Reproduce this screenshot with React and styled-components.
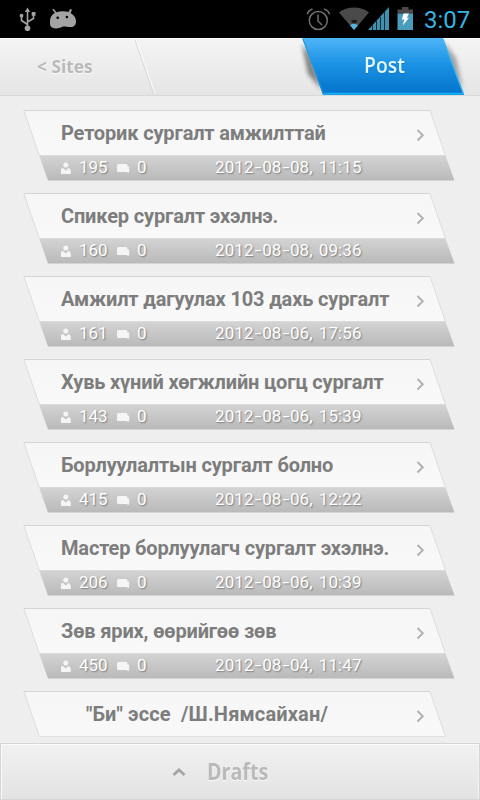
import { Fragment } from "react";
import styled, { createGlobalStyle, css } from "styled-components";

const GlobalStyle = createGlobalStyle`
  * {
    box-sizing: border-box;
  }
  body {
    margin: 0;
    background: #eeeeee;
    font-family: Roboto, "Noto Sans", sans-serif;
  }
`;

const flex = (justify = "flex-start") => css`
  display: flex;
  align-items: center;
  justify-content: ${justify};
`;

const Screen = styled.div`
  width: 480px;
  height: 800px;
  overflow: hidden;
  display: flex;
  flex-direction: column;
  background: #eeeeee;
`;

/* status bar */
const StatusBar = styled.div`
  ${flex("space-between")}
  height: 38px;
  flex: none;
  background: #000;
`;
const StatusIcons = styled.div`
  ${flex()}
`;
const Clock = styled.span`
  width: 57px;
  padding-left: 1px;
  padding-top: 2px;
  font-size: 24px;
  line-height: 36px;
  color: #33b5e5;
  white-space: nowrap;
`;

/* header */
const Header = styled.header`
  ${flex("space-between")}
  height: 58px;
  flex: none;
  align-items: stretch;
  background: linear-gradient(#f4f4f4, #e5e5e5);
  border-top: 1px solid #fbfbfb;
  border-bottom: 1px solid #d9d9d9;
`;
const BackButton = styled.div`
  ${flex()}
  width: 155px;
  padding: 0 0 2px 37px;
  position: relative;
`;
const Slash = styled.svg`
  position: absolute;
  right: 0;
  top: 0;
`;
const Condensed = styled.span`
  display: block;
  font-family: "Open Sans", "Noto Sans", sans-serif;
  font-size: ${(props) => props.$size}px;
  font-weight: ${(props) => props.$weight || 700};
  line-height: 1;
  color: ${(props) => props.$color};
  text-shadow: ${(props) => props.$shadow || "0 1px 0 #fafafa"};
  transform: scaleX(${(props) => props.$scale});
  transform-origin: 0 50%;
  white-space: nowrap;
`;
const PostButton = styled.div`
  width: 180px;
  position: relative;
  padding: 14px 0 0 64px;
`;
const PostShape = styled.svg`
  position: absolute;
  left: -10px;
  top: -1px;
`;
const PostLabel = styled.div`
  position: relative;
`;

/* list */
const List = styled.main`
  flex: 1;
  min-height: 0;
  overflow: hidden;
  padding: 14px 25px 0 23px;
`;
const Card = styled.article`
  height: 71px;
  margin-bottom: 12px;
  position: relative;
`;
const CardShape = styled.svg`
  position: absolute;
  left: 0;
  top: 0;
`;
const CardTitle = styled.div`
  ${flex("space-between")}
  position: relative;
  height: 45px;
  padding: 0 30px 0 ${(props) => (props.$indent ? 63 : 38)}px;
  svg {
    margin-top: 4px;
  }
`;
const TitleText = styled.h2`
  margin: 0;
  font-size: 20px;
  font-weight: 700;
  line-height: 24px;
  letter-spacing: ${(props) => (props.$indent ? 0.16 : -0.16)}px;
  color: #7d7d7d;
  white-space: pre;
`;
const CardMeta = styled.div`
  ${flex()}
  position: relative;
  height: 26px;
  padding: 0 0 3px 36px;
  font-size: 17px;
  line-height: 20px;
  color: #fff;
  text-shadow: 1px 1px 1.5px #7c7c7c;
  svg {
    margin-top: 2px;
  }
`;
const Views = styled.span`
  width: 43px;
  padding-left: 6px;
`;
const Comments = styled.span`
  width: 85px;
  padding-left: 7px;
`;
const DateText = styled.time`
  white-space: nowrap;
  letter-spacing: 0.13px;
  word-spacing: 1.6px;
`;
const Dash = styled.span`
  display: inline-block;
  width: 8.4px;
  text-align: center;
  transform: scaleX(1.45);
`;

/* footer */
const Drafts = styled.footer`
  ${flex()}
  height: 57px;
  flex: none;
  gap: 21px;
  padding-left: 171px;
  border: 1px solid #d5d5d5;
  background: linear-gradient(#f1f1f1, #e3e3e3);
  box-shadow: inset 1px 1px 0 #fafafa, inset -1px 0 0 #f5f5f5;
`;

const posts = [
  { title: "Реторик сургалт амжилттай", views: 195, date: "2012-08-08, 11:15" },
  { title: "Спикер сургалт эхэлнэ.", views: 160, date: "2012-08-08, 09:36" },
  { title: "Амжилт дагуулах 103 дахь сургалт", views: 161, date: "2012-08-06, 17:56" },
  { title: "Хувь хүний хөгжлийн цогц сургалт", views: 143, date: "2012-08-06, 15:39" },
  { title: "Борлуулалтын сургалт болно", views: 415, date: "2012-08-06, 12:22" },
  { title: "Мастер борлуулагч сургалт эхэлнэ.", views: 206, date: "2012-08-06, 10:39" },
  { title: "Зөв ярих, өөрийгөө зөв", views: 450, date: "2012-08-04, 11:47" },
  { title: "\"Би\" эссе  /Ш.Нямсайхан/", indent: true },
];

function LeftStatus() {
  return (
    <svg width="90" height="38" fill="none">
      <g stroke="#a3a3a3" strokeWidth="1.6">
        <path d="M27.5 28V11M27.5 24.5L21.5 20.5V16M27.5 22L33.5 18.5V14" />
      </g>
      <g fill="#a3a3a3">
        <path d="M24.8 12L27.5 7.5L30.2 12Z" />
        <circle cx="27.5" cy="28.3" r="2.8" />
        <circle cx="21.5" cy="15.7" r="1.9" />
        <rect x="31.7" y="12" width="3.8" height="3.8" />
        <path d="M50 22C50 17 52 14.5 55 13L52.3 9.5L53.6 8.7L56.5 12.2C60 11 65 11 68.5 12L70.3 9L72 9.8L70.5 13C74 15 76.2 18 76 21.5C76 25 74 27 70.5 27C67 27 66 26.3 63 26.5C60 28.7 52 29.5 50.5 26C50 25 50 23.5 50 22Z" />
      </g>
      <circle cx="57.7" cy="17.8" r="1.3" fill="#000" />
      <circle cx="66.9" cy="17" r="1.3" fill="#000" />
    </svg>
  );
}

function RightStatus() {
  return (
    <svg width="115" height="38" fill="none" overflow="visible">
      <g stroke="#6f6f6f" strokeWidth="1.5">
        <circle cx="10.3" cy="20.5" r="9" />
        <path d="M10 14.5V21L14 25M-.8 14.2C0 11.5 1.8 10 4.5 9M16 9C19 10 20.7 11.5 21.5 14.2" />
      </g>
      <path d="M31 12.5C39 5.8 53 5.8 61 12.5L46 30Z" fill="#4a4a4a" />
      <path d="M43 20.5C45 19.5 47.5 19.5 49.5 20.5L48 23H44.5Z" fill="#1d1d1d" />
      <path d="M42 25.2C44 23.5 48 23.5 50 25.2L46 30Z" fill="#56b4dc" />
      <path d="M60 30L81 7V30Z" fill="#438fae" />
      <path d="M64.5 25V30M68.5 21V30M72.5 17V30M76.5 12V30" stroke="#102c38" />
      <path d="M89.5 9.5H94V7H100.5V9.5H105V13.5H89.5Z" fill="#4a4a4a" />
      <rect x="89.5" y="13.5" width="15.5" height="16.5" fill="#4a9cbd" />
      <path d="M95.5 13.5H101L98.8 17.8H101L94.8 25.5L96.3 19.5H93.8Z" fill="#fff" />
    </svg>
  );
}

function PostBackground() {
  return (
    <PostShape width="190" height="57" viewBox="290 0 190 57">
      <defs>
        <linearGradient id="post" x1="0" y1="0" x2="0" y2="1">
          <stop offset="0" stopColor="#4fb4f8" />
          <stop offset=".45" stopColor="#1b93e4" />
          <stop offset="1" stopColor="#0272cb" />
        </linearGradient>
        <filter id="soft" x="-60%" y="-20%" width="220%" height="140%">
          <feGaussianBlur stdDeviation="2.2" />
        </filter>
      </defs>
      <path d="M302 6L310 16L322 52L308 36Z" fill="#444" opacity=".65" filter="url(#soft)" />
      <path d="M444 3L456 20L463 52L450 30Z" fill="#555" opacity=".5" filter="url(#soft)" />
      <path d="M302 0H443L464 57H323Z" fill="url(#post)" />
      <path d="M323 55.7H463" stroke="#19b0f5" strokeWidth="2" />
      <path d="M443 1L463.5 56" stroke="#3fb4f3" strokeWidth="1.3" />
      <path d="M303 1L323.5 56" stroke="#2497dd" />
    </PostShape>
  );
}

function PostDate({ value }) {
  return (
    <DateText>
      {value.split("-").map((part, i) => (
        <Fragment key={i}>
          {i > 0 && <Dash>-</Dash>}
          {part}
        </Fragment>
      ))}
    </DateText>
  );
}

function PostCard({ post }) {
  return (
    <Card>
      <CardShape width="434" height="72">
        <defs>
          <linearGradient id="face" x1="0" y1="0" x2="0" y2="1">
            <stop offset="0" stopColor="#f6f6f6" />
            <stop offset="1" stopColor="#f9f9f9" />
          </linearGradient>
          <linearGradient id="strip" x1="0" y1="0" x2="0" y2="1">
            <stop offset="0" stopColor="#d4d4d4" />
            <stop offset="1" stopColor="#b9b9b9" />
          </linearGradient>
        </defs>
        <path d="M.8 .5H407L422.3 45H16.2Z" fill="url(#face)" />
        <path d="M.8 .5H407" stroke="#d4d4d4" />
        <path d="M.8 .5L16.2 45M407 .5L422.3 45" stroke="#dcdcdc" />
        {post.date ? (
          <>
            <path d="M16 45H422.3L431.5 70.5H25Z" fill="url(#strip)" />
            <path d="M16 45.5H422.5" stroke="#dadada" />
          </>
        ) : (
          <path d="M16 45.5H422.5" stroke="#e0e0e0" />
        )}
      </CardShape>
      <CardTitle $indent={post.indent}>
        <TitleText $indent={post.indent}>{post.title}</TitleText>
        <svg width="9" height="14" fill="none">
          <path d="M1.5 2L6.8 7.3L1.5 12.5" stroke="#b0b0b0" strokeWidth="1.9" />
        </svg>
      </CardTitle>
      {post.date && (
        <CardMeta>
          <svg width="14" height="14" fill="#f5f5f5">
            <circle cx="6.8" cy="4" r="2.5" />
            <path d="M2 13V8.5C2 7.5 3 7 4 7L6.8 9.5L9.5 7C11 7.5 11.8 9 11.8 10V13Z" />
          </svg>
          <Views>{post.views}</Views>
          <svg width="14" height="12" fill="#f5f5f5">
            <path d="M1 3.5Q1 2 2.5 2H10Q11.5 2 11.5 3.5V4.5H12.5Q13.2 4.5 13.2 5.5V9.5L12.5 11L10.5 10H2.5Q1 10 1 8.5Z" />
          </svg>
          <Comments>0</Comments>
          <PostDate value={post.date} />
        </CardMeta>
      )}
    </Card>
  );
}

function App() {
  return (
    <>
      <GlobalStyle />
      <Screen>
        <StatusBar>
          <LeftStatus />
          <StatusIcons>
            <RightStatus />
            <Clock>3:07</Clock>
          </StatusIcons>
        </StatusBar>
        <Header>
          <BackButton>
            <Condensed $size={18.5} $scale={0.935} $color="#b9b9b9">
              &lt; Sites
            </Condensed>
            <Slash width="22" height="56" fill="none">
              <path d="M2 1L21 56" stroke="#d6d6d6" />
              <path d="M3.2 1L22 55" stroke="#fafafa" />
            </Slash>
          </BackButton>
          <PostButton>
            <PostBackground />
            <PostLabel>
              <Condensed $size={22} $weight={600} $scale={0.88} $color="#e3f7ff" $shadow="0 1px 1px #1479bd">
                Post
              </Condensed>
            </PostLabel>
          </PostButton>
        </Header>
        <List>
          {posts.map((post) => (
            <PostCard key={post.title} post={post} />
          ))}
        </List>
        <Drafts>
          <svg width="14" height="12" fill="none">
            <path d="M1.5 9L7 4L12.5 9" stroke="#a5a5a2" strokeWidth="2.8" />
          </svg>
          <Condensed $size={23} $scale={0.855} $color="#b9b9b9">
            Drafts
          </Condensed>
        </Drafts>
      </Screen>
    </>
  );
}

export default App;
